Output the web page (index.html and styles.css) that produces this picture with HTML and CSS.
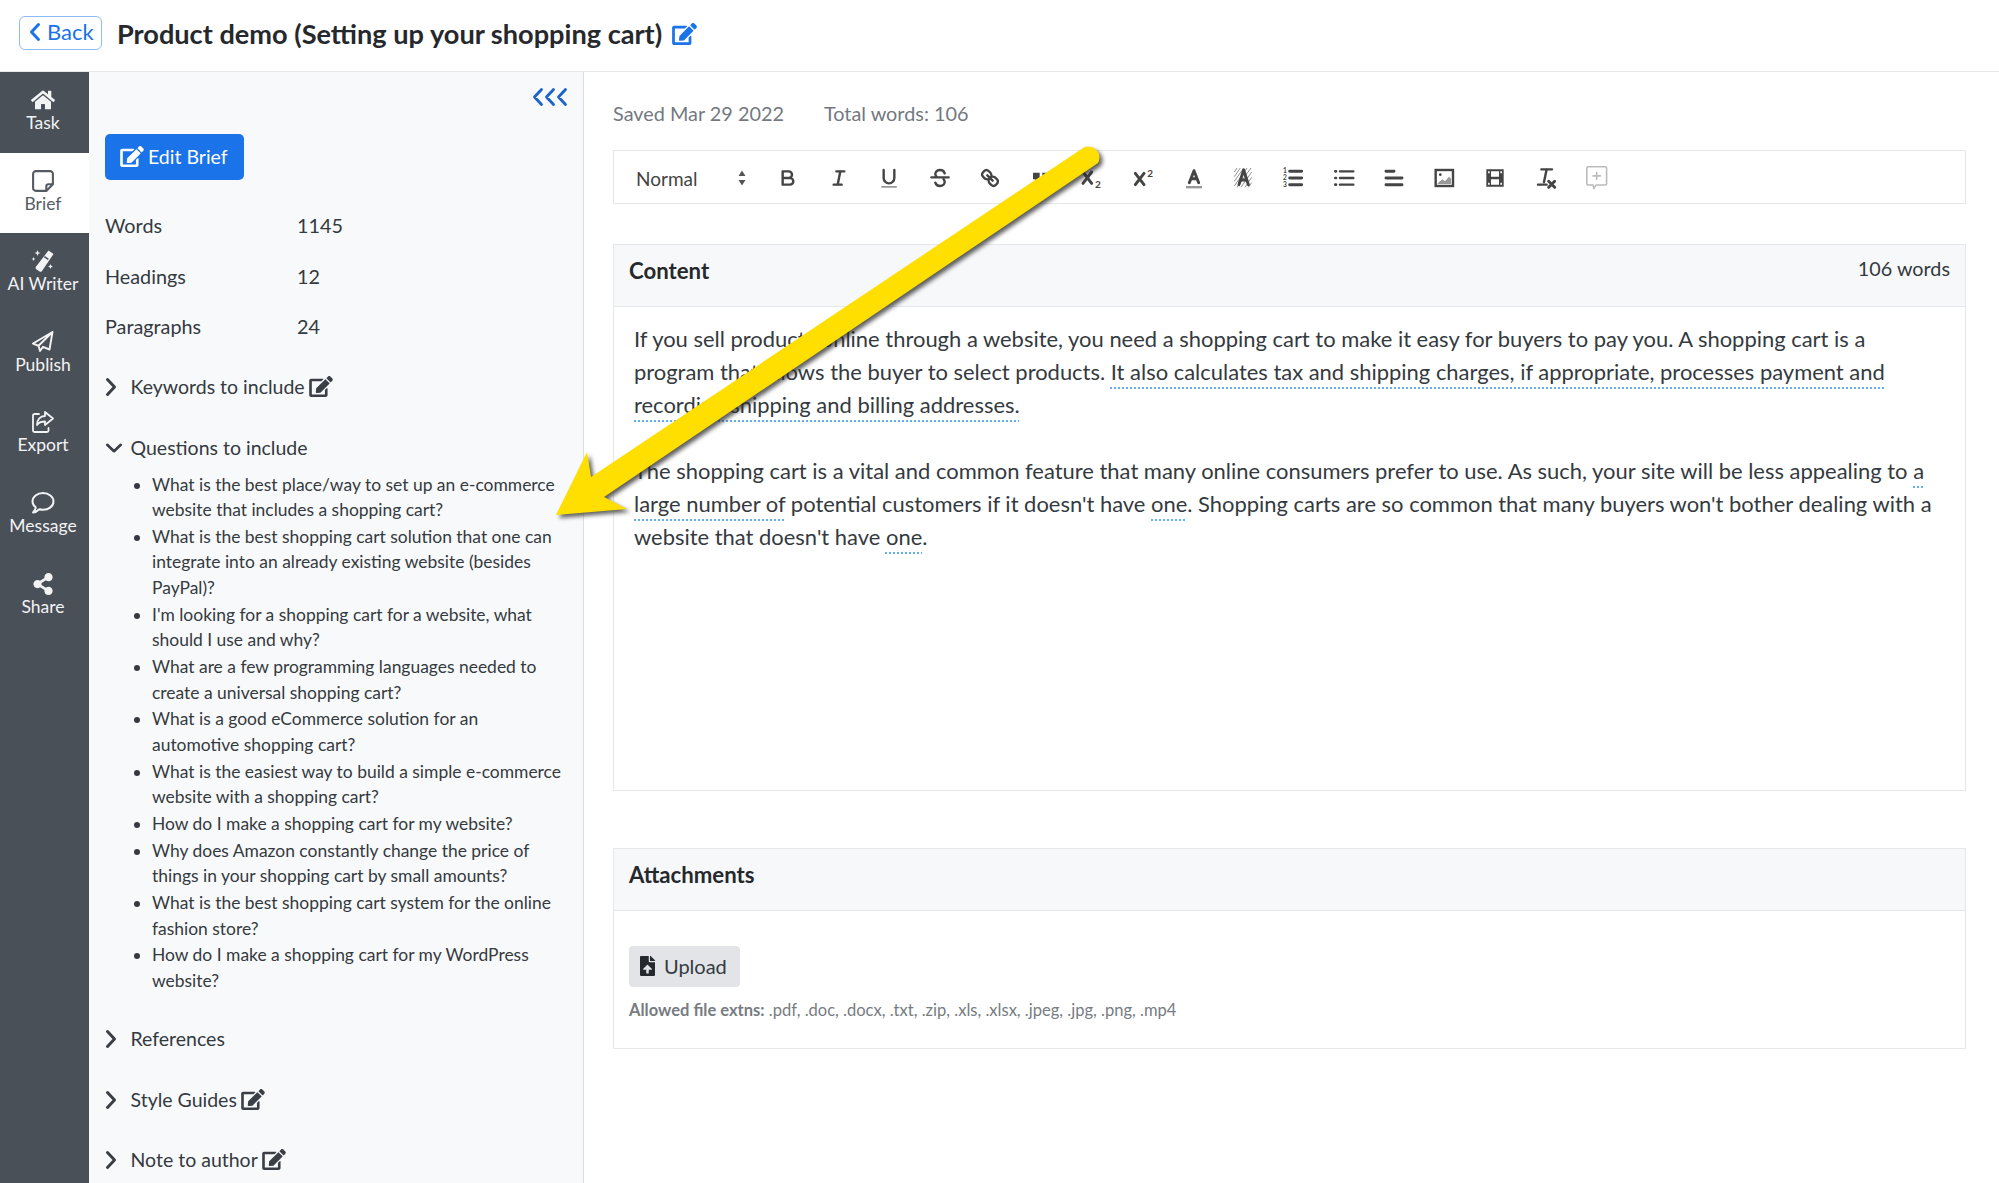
FILE: index.html
```html
<!DOCTYPE html>
<html lang="en">
<head>
<meta charset="utf-8">
<title>Product demo</title>
<link rel="stylesheet" href="styles.css">
</head>
<body>
<svg class="defs" width="0" height="0">
  <symbol id="i-edit" viewBox="0 0 576 512"><path d="M402.6 83.2l90.2 90.2c3.8 3.8 3.8 10 0 13.8L274.4 405.6l-92.8 10.3c-12.4 1.4-22.9-9.1-21.5-21.5l10.3-92.8L388.8 83.2c3.8-3.8 10-3.8 13.8 0zm162-22.9l-48.8-48.8c-15.2-15.2-39.9-15.2-55.2 0l-35.4 35.4c-3.8 3.8-3.8 10 0 13.8l90.2 90.2c3.8 3.8 10 3.8 13.8 0l35.4-35.4c15.2-15.3 15.2-40 0-55.2zM384 346.2V448H64V128h229.8c3.2 0 6.2-1.3 8.5-3.5l40-40c7.6-7.6 2.2-20.5-8.5-20.5H48C21.5 64 0 85.5 0 112v352c0 26.5 21.5 48 48 48h352c26.5 0 48-21.5 48-48V306.2c0-10.7-12.9-16-20.5-8.5l-40 40c-2.2 2.3-3.5 5.3-3.5 8.5z"/></symbol>
  <symbol id="i-right" viewBox="0 0 12 20"><path d="M2.5 2.5 9.5 10l-7 7.5" fill="none" stroke="currentColor" stroke-width="3" stroke-linecap="round" stroke-linejoin="round"/></symbol>
</svg>

<header class="topbar">
  <a class="back"><svg class="back-icon" viewBox="0 0 12 20"><path d="M9.5 2.5 2.5 10l7 7.5" fill="none" stroke="currentColor" stroke-width="3" stroke-linecap="round" stroke-linejoin="round"/></svg>Back</a>
  <h1 class="title">Product demo (Setting up your shopping cart)</h1>
  <svg class="title-edit"><use href="#i-edit"/></svg>
</header>

<div class="app">
  <nav class="rail">
    <a class="tab">
      <svg class="tab-icon" viewBox="0 0 576 512"><path fill="currentColor" d="M280.37 148.26L96 300.11V464a16 16 0 0 0 16 16l112.06-.29a16 16 0 0 0 15.92-16V368a16 16 0 0 1 16-16h64a16 16 0 0 1 16 16v95.64a16 16 0 0 0 16 16.05L464 480a16 16 0 0 0 16-16V300L295.67 148.26a12.19 12.19 0 0 0-15.3 0zM571.6 251.47L488 182.56V44.05a12 12 0 0 0-12-12h-56a12 12 0 0 0-12 12v72.61L318.47 43a48 48 0 0 0-61 0L4.34 251.47a12 12 0 0 0-1.6 16.9l25.5 31A12 12 0 0 0 45.15 301l235.22-193.74a12.19 12.19 0 0 1 15.3 0L530.9 301a12 12 0 0 0 16.9-1.6l25.5-31a12 12 0 0 0-1.7-16.93z"/></svg>
      <span>Task</span>
    </a>
    <a class="tab tab-active">
      <svg class="tab-icon" viewBox="2 2 20 20"><path fill="none" stroke="currentColor" stroke-width="1.900" stroke-linejoin="round" d="M5.500 3h13A2.500 2.500 0 0 1 21 5.500V15l-6 6H5.500A2.500 2.500 0 0 1 3 18.500v-13A2.500 2.500 0 0 1 5.500 3zM21 15h-4a2 2 0 0 0-2 2v4"/></svg>
      <span>Brief</span>
    </a>
    <a class="tab">
      <svg class="tab-icon" viewBox="0 0 22 22"><path fill="currentColor" d="M16.500.5 21.500 4 10 21a1.800 1.800 0 0 1-2.400.5l-3.300-2.300a1.800 1.800 0 0 1-.4-2.400zM5.500 0l.8 2.200 2.200.8-2.200.8-.8 2.200-.8-2.200L2.500 3l2.200-.8zM1.500 7l.6 1.400 1.400.6-1.400.6-.6 1.400-.6-1.400L-.5 9 .9 8.400zM18.500 14l.7 1.800 1.800.7-1.800.7-.7 1.800-.7-1.800-1.800-.7 1.800-.7z"/><path fill="#4a5058" d="M12.800 6 16.800 8.800l-.9 1.300-4-2.800z"/></svg>
      <span>AI Writer</span>
    </a>
    <a class="tab">
      <svg class="tab-icon" viewBox="1 1 22 22"><path fill="none" stroke="currentColor" stroke-width="1.900" stroke-linejoin="round" d="M21.500 2 2 13.500l5.500 2.300L21.500 2 18.500 19.500l-6.500-2.700-3 4.200-1.500-5.200"/></svg>
      <span>Publish</span>
    </a>
    <a class="tab">
      <svg class="tab-icon" viewBox="2 1.500 22 22"><path fill="none" stroke="currentColor" stroke-width="1.800" stroke-linejoin="round" stroke-linecap="round" d="M9 4.500H4.500A1.500 1.500 0 0 0 3 6v15a1.500 1.500 0 0 0 1.500 1.500H17a1.500 1.500 0 0 0 1.500-1.500v-2.500M15 2.500l8 6.500-8 6.500v-3.500c-4 0-6.500 1-8 3.500 0-5 3-8.800 8-9z"/></svg>
      <span>Export</span>
    </a>
    <a class="tab">
      <svg class="tab-icon" viewBox="1 2 22 21"><path fill="none" stroke="currentColor" stroke-width="1.900" stroke-linejoin="round" d="M12 3c5.500 0 10 3.500 10 8s-4.500 8-10 8a12 12 0 0 1-3.500-.5C7 20 5 21.500 2.500 21.500 4 20 5 18 5 16.500 3 15 2 13.200 2 11c0-4.500 4.500-8 10-8z"/></svg>
      <span>Message</span>
    </a>
    <a class="tab">
      <svg class="tab-icon" viewBox="0 0 448 512"><path fill="currentColor" d="M352 320c-22.608 0-43.387 7.819-59.79 20.895l-102.486-64.054a96.551 96.551 0 0 0 0-41.683l102.486-64.054C308.613 184.181 329.392 192 352 192c53.019 0 96-42.981 96-96S405.019 0 352 0s-96 42.981-96 96c0 7.158.79 14.13 2.276 20.841L155.79 180.895C139.387 167.819 118.608 160 96 160c-53.019 0-96 42.981-96 96s42.981 96 96 96c22.608 0 43.387-7.819 59.79-20.895l102.486 64.054A96.301 96.301 0 0 0 256 416c0 53.019 42.981 96 96 96s96-42.981 96-96-42.981-96-96-96z"/></svg>
      <span>Share</span>
    </a>
  </nav>

  <aside class="panel">
    <div class="collapse-row">
      <svg class="collapse" viewBox="0 0 36 20"><path d="M9.500 2.500 2.500 10l7 7.500M21.500 2.500 14.500 10l7 7.500M33.500 2.500 26.500 10l7 7.500" fill="none" stroke="currentColor" stroke-width="2.800" stroke-linecap="round" stroke-linejoin="round"/></svg>
    </div>
    <a class="edit-brief"><svg class="edit-brief-icon"><use href="#i-edit"/></svg>Edit Brief</a>
    <dl class="stats">
      <div class="stat"><dt>Words</dt><dd>1145</dd></div>
      <div class="stat"><dt>Headings</dt><dd>12</dd></div>
      <div class="stat"><dt>Paragraphs</dt><dd>24</dd></div>
    </dl>
    <section class="acc">
      <div class="acc-head"><svg class="acc-arrow"><use href="#i-right"/></svg>Keywords to include<svg class="acc-edit"><use href="#i-edit"/></svg></div>
    </section>
    <section class="acc">
      <div class="acc-head"><svg class="acc-arrow acc-open" viewBox="0 0 20 12"><path d="M2.500 2.500 10 9.500l7.500-7" fill="none" stroke="currentColor" stroke-width="3" stroke-linecap="round" stroke-linejoin="round"/></svg>Questions to include</div>
      <ul class="questions">
        <li>What is the best place/way to set up an e-commerce website that includes a shopping cart?</li>
        <li>What is the best shopping cart solution that one can integrate into an already existing website (besides PayPal)?</li>
        <li>I'm looking for a shopping cart for a website, what should I use and why?</li>
        <li>What are a few programming languages needed to create a universal shopping cart?</li>
        <li>What is a good eCommerce solution for an automotive shopping cart?</li>
        <li>What is the easiest way to build a simple e-commerce website with a shopping cart?</li>
        <li>How do I make a shopping cart for my website?</li>
        <li>Why does Amazon constantly change the price of things in your shopping cart by small amounts?</li>
        <li>What is the best shopping cart system for the online fashion store?</li>
        <li>How do I make a shopping cart for my WordPress website?</li>
      </ul>
    </section>
    <section class="acc">
      <div class="acc-head"><svg class="acc-arrow"><use href="#i-right"/></svg>References</div>
    </section>
    <section class="acc">
      <div class="acc-head"><svg class="acc-arrow"><use href="#i-right"/></svg>Style Guides<svg class="acc-edit"><use href="#i-edit"/></svg></div>
    </section>
    <section class="acc">
      <div class="acc-head"><svg class="acc-arrow"><use href="#i-right"/></svg>Note to author<svg class="acc-edit"><use href="#i-edit"/></svg></div>
    </section>
  </aside>

  <main class="main">
    <div class="meta"><span>Saved Mar 29 2022</span><span>Total words: 106</span></div>

    <div class="toolbar">
      <div class="picker"><span>Normal</span>
        <svg class="picker-arrows" viewBox="0 0 10 18"><path fill="currentColor" d="M5 1.500 8.500 7h-7zM5 16.500 1.500 11h7z"/></svg>
      </div>
      <span class="tool"><svg viewBox="0 0 18 18"><path class="st2" d="M5 4h4.500a2.500 2.500 0 0 1 0 5H5zM5 9h5.500a2.500 2.500 0 0 1 0 5H5z"/></svg></span>
      <span class="tool"><svg viewBox="0 0 18 18"><path class="st2" d="M7 4h6M5 14h6M8 14l2-10"/></svg></span>
      <span class="tool"><svg viewBox="0 0 18 18"><path class="st2" d="M5 3v6a4 4 0 0 0 8 0V3"/><rect class="fl-grey" x="3" y="15" width="12" height="1.400" rx=".6"/></svg></span>
      <span class="tool"><svg viewBox="0 0 18 18"><path class="st2" d="M15.500 8.500h-13M12.500 5.500C12 3.800 10.500 3 9 3 7 3 5.500 4.200 5.500 6c0 1 .5 2 1.500 2.500M5.500 12.500C6 14.300 7.500 15 9 15c2 0 3.500-1.200 3.500-3 0-.8-.3-1.500-.8-2"/></svg></span>
      <span class="tool"><svg viewBox="0 0 18 18"><path class="st2" d="M7 7l4 4M8.900 4.600a3.500 3.500 0 0 1 .4 4.700 3.500 3.500 0 0 1-4.700-.4C3.200 7.500 2 6.400 4.200 4.200s3.300-1 4.700.4zM13.400 9.100a3.500 3.500 0 0 0-4.700-.4 3.500 3.500 0 0 0 .4 4.700c1.400 1.400 2.500 2.500 4.700.4s1-3.300-.4-4.700z"/></svg></span>
      <span class="tool"><svg viewBox="0 0 18 18"><path class="fl" d="M3 5h5v5H6c0 1.500-.5 2.500-2 3l-.5-1c1-.4 1.300-1 1.300-2H3zM10 5h5v5h-2c0 1.500-.5 2.500-2 3l-.5-1c1-.4 1.300-1 1.300-2H10z"/></svg></span>
      <span class="tool"><svg viewBox="0 0 18 18"><path class="st2 st-bold" d="M3 4.500l6.500 8.500M9.500 4.500 3 13"/><text class="tool-num" x="12" y="16.500">2</text></svg></span>
      <span class="tool"><svg viewBox="0 0 18 18"><path class="st2 st-bold" d="M4 5.500l6.500 8.500M10.500 5.500 4 14"/><text class="tool-num" x="13" y="8">2</text></svg></span>
      <span class="tool"><svg viewBox="0 0 18 18"><path class="st2 st-bold" d="M7 12.500l3.500-9 3.500 9M8.300 9.500h4.400"/><rect class="fl-grey" x="4.500" y="15" width="12" height="1.800"/></svg></span>
      <span class="tool"><svg viewBox="0 0 18 18"><path class="hatch" d="M2.500 4.500l2-3M2.500 8l4.500-6.500M2.500 11.500l7-10M2.500 15l9.500-13.500M4.500 16l10.500-14.500M7.500 16l8-11.500M10.500 16l5-7.500M13 16l2.500-3.500"/><path class="st2 st-bold" d="M6 14l3.500-11 3.500 11M7.300 10.500h4.400"/></svg></span>
      <span class="tool"><svg viewBox="0 0 18 18"><path class="st2 st-bold" d="M6.500 4h9M6.500 9h9M6.500 14h9"/><text class="tool-num tool-num-xs" x="1.500" y="5.500">1</text><text class="tool-num tool-num-xs" x="1.500" y="10.500">2</text><text class="tool-num tool-num-xs" x="1.500" y="15.500">3</text></svg></span>
      <span class="tool"><svg viewBox="0 0 18 18"><path class="st2" d="M6 4h10M6 9h10M6 14h10"/><path class="st2 dots" d="M2.500 4h.5M2.500 9h.5M2.500 14h.5"/></svg></span>
      <span class="tool"><svg viewBox="0 0 18 18"><path class="st2 st-bold" d="M3 4h6M3 9h12M3 14h12"/></svg></span>
      <span class="tool"><svg viewBox="0 0 18 18"><rect x="2" y="3" width="13" height="12" fill="none" stroke="#444" stroke-width="1.800"/><path class="fl-grey" d="M3.500 13l3.500-3 2 1.500 3-3.500 1.500 1.500V13.500H3.500z"/><circle class="fl" cx="5.500" cy="6.500" r="1"/></svg></span>
      <span class="tool"><svg viewBox="0 0 18 18"><path class="fl" fill-rule="evenodd" d="M2.500 2.500h13v13h-13zM6 4v4h6V4zM6 10v4h6v-4zM3.800 4v1.500H5V4zM13 4v1.500h1.200V4zM3.800 12.500V14H5v-1.500zM13 12.500V14h1.200v-1.500z"/></svg></span>
      <span class="tool"><svg viewBox="0 0 18 18"><path class="st2" d="M5.500 2.500h8M9.500 2.500l-2 9.500M3 14h6.500"/><path class="st2 st-bold" d="M11 11.500l4.500 4.500M15.500 11.500 11 16"/></svg></span>
      <span class="tool"><svg viewBox="1 1 15 17"><path fill="none" stroke="#bbb" stroke-width="1.100" stroke-linejoin="round" d="M3 1.500h12a1 1 0 0 1 1 1v11a1 1 0 0 1-1 1H8.500l-1.500 2.500-.5-2.500H3a1 1 0 0 1-1-1v-11a1 1 0 0 1 1-1zM9 5v6M6 8h6"/></svg></span>
    </div>

    <section class="card card-content">
      <div class="card-head"><h2>Content</h2><span class="count">106 words</span></div>
      <div class="doc">
        <p>If you sell products online through a website, you need a shopping cart to make it easy for buyers to pay you. A shopping cart is a program that allows the buyer to select products. <span class="flag">It also calculates tax and shipping charges, if appropriate, processes payment and recording shipping and billing addresses.</span></p>
        <p>The shopping cart is a vital and common feature that many online consumers prefer to use. As such, your site will be less appealing to <span class="flag">a large number of</span> potential customers if it doesn't have <span class="flag">one</span>. Shopping carts are so common that many buyers won't bother dealing with a website that doesn't have <span class="flag">one</span>.</p>
      </div>
    </section>

    <section class="card card-attach">
      <div class="card-head"><h2>Attachments</h2></div>
      <div class="attach-body">
        <a class="upload"><svg class="upload-icon" viewBox="0 0 384 512"><path fill="currentColor" d="M224 136V0H24C10.700 0 0 10.700 0 24v464c0 13.300 10.700 24 24 24h336c13.300 0 24-10.700 24-24V160H248c-13.200 0-24-10.800-24-24zm65.180 216.010H224v80c0 8.840-7.160 16-16 16h-32c-8.840 0-16-7.160-16-16v-80H94.820c-14.280 0-21.410-17.290-11.270-27.360l96.420-95.700c6.650-6.610 17.390-6.610 24.040 0l96.420 95.700c10.150 10.070 3.030 27.360-11.250 27.360zM377 105L279.100 7c-4.500-4.500-10.600-7-17-7H256v128h128v-6.100c0-6.300-2.500-12.400-7-16.900z"/></svg>Upload</a>
        <p class="allowed"><b>Allowed file extns:</b> .pdf, .doc, .docx, .txt, .zip, .xls, .xlsx, .jpeg, .jpg, .png, .mp4</p>
      </div>
    </section>
  </main>
</div>

<svg class="arrow" viewBox="0 0 1999 1183"><path d="M556 515 587 452 591 477 1083 148A11 11 0 0 1 1098 163L604 497 627 509Z"/></svg>
</body>
</html>
```
FILE: styles.css
```css
* { box-sizing: border-box; }
html, body { margin: 0; height: 100%; }
body {
  position: relative;
  height: 1183px;
  overflow: hidden;
  font-family: "Lato", "Noto Sans", sans-serif;
  color: #343a40;
  background: #fff;
}
.defs { position: absolute; }

.topbar {
  display: flex;
  align-items: center;
  height: 72px;
  padding: 0 0 4px 19px;
  border-bottom: 1px solid #e6e7e9;
}
.back {
  display: flex;
  align-items: center;
  gap: 6px;
  width: 83px;
  height: 34px;
  margin-bottom: 2px;
  padding: 0 0 2px 9px;
  border: 1px solid #8fbcf5;
  border-radius: 6px;
  color: #1a73e8;
  font-size: 22px;
}
.back-icon { width: 12px; height: 20px; }
.title {
  margin: 0 0 0 15px;
  font-size: 27.150px;
  font-weight: 700;
  color: #25282c;
}
.title-edit { width: 25px; height: 22px; margin-left: 10px; fill: #1a73e8; }

.app { display: flex; height: 1111px; }

.rail { width: 89px; flex: none; background: #4a5058; color: #f2f3f4; }
.tab {
  display: flex;
  flex-direction: column;
  align-items: center;
  height: 80.600px;
  padding: 17px 3px 0 0;
  font-size: 17.500px;
  line-height: 22px;
}
.tab-active { background: #fff; color: #555b62; }
.tab-icon { width: 24px; height: 22px; margin-bottom: 1px; }

.panel {
  width: 495px;
  flex: none;
  padding: 0 14px 0 16px;
  background: #f8f9fb;
  border-right: 1px solid #dcdee1;
  font-size: 19.800px;
}
.collapse-row { display: flex; justify-content: flex-end; height: 36px; padding: 15px 1px 0 0; }
.collapse { width: 36px; height: 20px; color: #1a62cc; }
.edit-brief {
  display: flex;
  align-items: center;
  gap: 4px;
  width: 139px;
  height: 46px;
  margin-top: 26px;
  padding: 0 0 2px 15px;
  border-radius: 5px;
  background: #1a73e8;
  color: #fff;
  font-size: 19.500px;
}
.edit-brief-icon { width: 24px; height: 21px; fill: #fff; }

.stats { margin: 20px 0 0; }
.stat { display: flex; align-items: center; height: 50.500px; }
.stat dt { width: 192px; }
.stat dd { margin: 0; }

.acc { margin-top: 37px; }
.stats + .acc { margin-top: 23px; }
.acc:last-child { margin-top: 36px; }
.acc-head { display: flex; align-items: center; height: 24px; font-size: 19.500px; }
.acc-arrow { width: 12px; height: 20px; margin-right: 13.500px; color: #3a3f45; }
.acc-open { width: 18px; height: 12px; margin-right: 7.500px; }
.acc-edit { width: 24px; height: 21px; margin-left: 4px; fill: #3a3f45; }

.questions {
  margin: 12px 0 -4px;
  padding: 0 3px 0 47px;
  font-size: 17.450px;
  line-height: 25.660px;
}
.questions li + li { margin-top: 1px; }

.main { flex: 1; min-width: 0; padding: 0 33px 0 29px; }
.meta { display: flex; gap: 40px; height: 78px; padding-top: 29px; color: #73797f; font-size: 19.850px; line-height: 24px; }

.toolbar {
  display: flex;
  align-items: center;
  height: 54px;
  padding: 2px 0 0 22px;
  border: 1px solid #e6e7e9;
}
.picker { display: flex; align-items: center; justify-content: space-between; width: 127px; padding-right: 16px; font-size: 19px; color: #444; }
.picker-arrows { width: 10px; height: 18px; color: #555; }
.tool { display: flex; justify-content: center; width: 50.500px; flex: none; }
.tool svg { width: 24px; height: 24px; }
.st2 { fill: none; stroke: #444; stroke-width: 1.800; stroke-linecap: round; stroke-linejoin: round; }
.st-bold { stroke-width: 2.200; }
.fl { fill: #444; }
.fl-grey { fill: #999; }
.hatch { fill: none; stroke: #888; stroke-width: .7; }
.dots { stroke-width: 2; }
.tool-num { font-size: 7.500px; font-weight: 700; fill: #444; }
.tool-num-xs { font-size: 5px; }

.card { border: 1px solid #e6e7e9; }
.card-content { height: 547px; margin-top: 40px; }
.card-attach { height: 201px; margin-top: 57px; }
.card-head {
  display: flex;
  justify-content: space-between;
  align-items: flex-start;
  height: 62px;
  padding: 13px 15px 0;
  background: #f7f8fa;
  border-bottom: 1px solid #e6e7e9;
}
.card-head h2 { margin: 0; font-size: 22.200px; line-height: 26px; font-weight: 700; color: #25282c; }
.count { margin-top: -2px; font-size: 19.800px; line-height: 24px; }

.doc { padding: 15px 20px 0; font-size: 21.950px; line-height: 33px; }
.doc p { margin: 0 0 33px; }
.flag {
  text-decoration: underline dotted #62aef0 2px;
  text-underline-offset: 7px;
}

.attach-body { padding: 35px 15px 0; }
.upload {
  display: flex;
  align-items: center;
  gap: 9px;
  width: 111px;
  height: 41px;
  padding: 0 0 2px 11px;
  border-radius: 4px;
  background: #e2e4e7;
  font-size: 20px;
  color: #343a40;
}
.upload-icon { width: 15px; height: 20px; color: #25282c; }
.allowed { margin: 13px 0 0; font-size: 16.550px; line-height: 20px; color: #777c82; }

.arrow {
  position: absolute;
  left: 0;
  top: 0;
  width: 1999px;
  height: 1183px;
  pointer-events: none;
  fill: #ffdf00;
  filter: drop-shadow(3px 3px 2px rgba(40, 40, 40, .75));
}
```
